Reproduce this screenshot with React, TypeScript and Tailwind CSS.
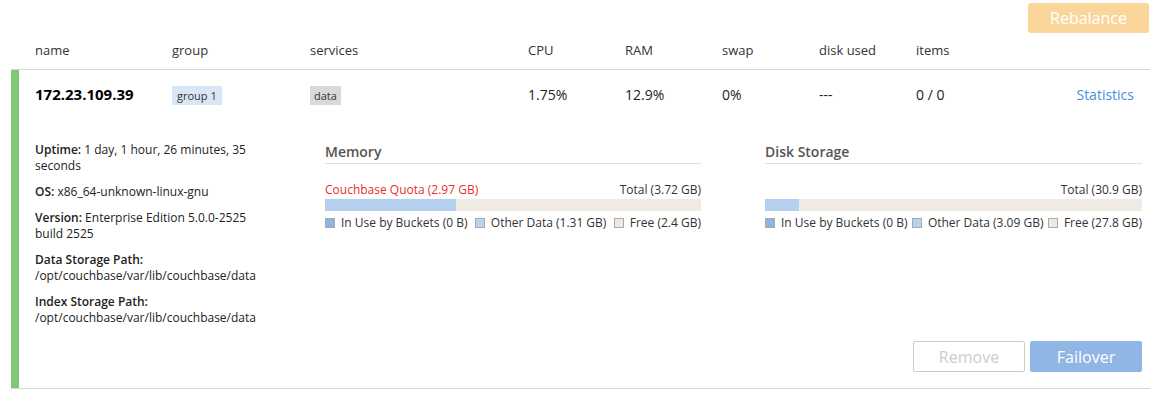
import React from "react";

const cols = ["w-[137px]", "w-[138px]", "w-[218px]", "w-[97px]", "w-[97px]", "w-[97px]", "w-[97px]"];

function Legend({ items }: { items: { color: string; label: string }[] }) {
  return (
    <div className="mt-[4px] flex justify-between text-[12px] leading-[16px] text-[#333]">
      {items.map((it) => (
        <div key={it.label} className="flex items-center">
          <span className={`mr-[6px] inline-block h-[10px] w-[10px] border border-[#aaa] ${it.color}`} />
          <span>{it.label}</span>
        </div>
      ))}
    </div>
  );
}

export default function App() {
  return (
    <div className="w-[1159px] h-[397px] bg-white text-[#333]" style={{ fontFamily: "'Open Sans', 'Noto Sans', sans-serif" }}>
      <div className="ml-[11px] mr-[9px]">
        <div className="flex justify-end pt-[3px] pr-[1px]">
          <button className="h-[30px] w-[121px] rounded-[3px] bg-[#fad69b] text-[16px] text-white">Rebalance</button>
        </div>
        <div className="flex h-[37px] items-center border-b border-[#d6d6d6] pl-[24px] text-[13px] text-[#333]">
          <div className={cols[0]}>name</div>
          <div className={cols[1]}>group</div>
          <div className={cols[2]}>services</div>
          <div className={cols[3]}>CPU</div>
          <div className={cols[4]}>RAM</div>
          <div className={cols[5]}>swap</div>
          <div className={cols[6]}>disk used</div>
          <div>items</div>
        </div>
        <div className="border-b border-[#d6d6d6]">
          <div className="border-l-[8px] border-[#80c777] pl-[16px] pr-[8px]">
            <div className="flex h-[48px] items-center pr-[8px] text-[14px] text-[#222]">
              <div className={`${cols[0]} text-[15px] font-bold text-black`}>172.23.109.39</div>
              <div className={cols[1]}>
                <span className="bg-[#d9e6f6] px-[5px] py-[2px] text-[11px] text-[#333]">group 1</span>
              </div>
              <div className={cols[2]}>
                <span className="bg-[#d9d9d9] px-[4px] py-[2px] text-[11px] text-[#333]">data</span>
              </div>
              <div className={cols[3]}>1.75%</div>
              <div className={cols[4]}>12.9%</div>
              <div className={cols[5]}>0%</div>
              <div className={cols[6]}>---</div>
              <div className="flex-1">0 / 0</div>
              <a className="text-[14px] text-[#4a8fd9]">Statistics</a>
            </div>
            <div className="flex pt-[24px]">
              <div className="w-[290px] pr-[62px] text-[12px] leading-[16px] text-[#222]">
                <p className="mb-[10px]"><b className="font-semibold">Uptime:</b> 1 day, 1 hour, 26 minutes, 35 seconds</p>
                <p className="mb-[10px]"><b className="font-semibold">OS:</b> x86_64-unknown-linux-gnu</p>
                <p className="mb-[10px]"><b className="font-semibold">Version:</b> Enterprise Edition 5.0.0-2525 build 2525</p>
                <p className="mb-[10px]"><b className="font-semibold">Data Storage Path:</b><br />/opt/couchbase/var/lib/couchbase/data</p>
                <p><b className="font-semibold">Index Storage Path:</b><br />/opt/couchbase/var/lib/couchbase/data</p>
              </div>
              <div className="w-[376px]">
                <div className="border-b border-[#e0e0e0] text-[14px] font-semibold leading-[20px] text-[#555] pb-[1px]">Memory</div>
                <div className="mt-[18px] flex justify-between text-[12px] leading-[16px]">
                  <span className="text-[#e8302c]">Couchbase Quota (2.97 GB)</span>
                  <span className="text-[#333]">Total (3.72 GB)</span>
                </div>
                <div className="mt-[1px] flex h-[12px] bg-[#efebe3]">
                  <div className="h-full bg-[#b5cfee]" style={{ width: "34.8%" }} />
                </div>
                <Legend
                  items={[
                    { color: "bg-[#8eb4e3]", label: "In Use by Buckets (0 B)" },
                    { color: "bg-[#b8d1ef]", label: "Other Data (1.31 GB)" },
                    { color: "bg-[#eeeae2]", label: "Free (2.4 GB)" },
                  ]}
                />
              </div>
              <div className="ml-[64px] w-[377px]">
                <div className="border-b border-[#e0e0e0] text-[14px] font-semibold leading-[20px] text-[#555] pb-[1px]">Disk Storage</div>
                <div className="mt-[18px] flex justify-end text-[12px] leading-[16px]">
                  <span className="text-[#333]">Total (30.9 GB)</span>
                </div>
                <div className="mt-[1px] flex h-[12px] bg-[#efebe3]">
                  <div className="h-full bg-[#b5cfee]" style={{ width: "9%" }} />
                </div>
                <Legend
                  items={[
                    { color: "bg-[#8eb4e3]", label: "In Use by Buckets (0 B)" },
                    { color: "bg-[#b8d1ef]", label: "Other Data (3.09 GB)" },
                    { color: "bg-[#eeeae2]", label: "Free (27.8 GB)" },
                  ]}
                />
              </div>
            </div>
            <div className="mt-[15px] flex justify-end gap-[5px] pb-[16px]">
              <button className="h-[31px] w-[112px] rounded-[2px] border border-[#ccc] bg-white text-[16px] text-[#ccc]">Remove</button>
              <button className="h-[31px] w-[112px] rounded-[2px] bg-[#8fb6e5] text-[16px] text-white">Failover</button>
            </div>
          </div>
        </div>
      </div>
    </div>
  );
}
